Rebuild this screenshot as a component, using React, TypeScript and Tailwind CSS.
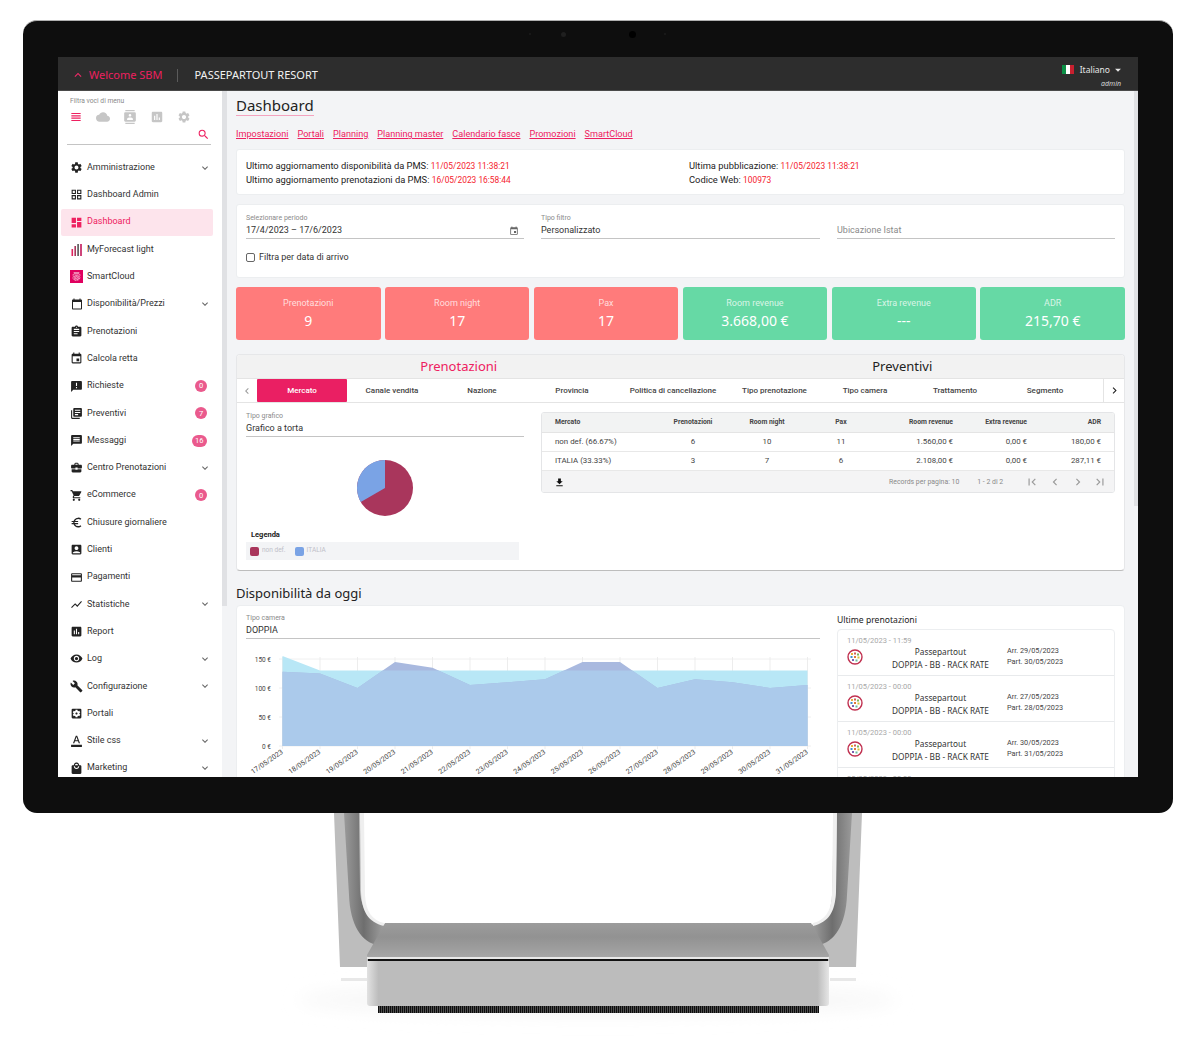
import React from "react";
import {
  MdSettings,
  MdGridView,
  MdDashboard,
  MdFingerprint,
  MdCalendarToday,
  MdAssignment,
  MdEvent,
  MdAnnouncement,
  MdLibraryBooks,
  MdMessage,
  MdBusinessCenter,
  MdShoppingCart,
  MdEuroSymbol,
  MdAccountBox,
  MdCreditCard,
  MdShowChart,
  MdAssessment,
  MdVisibility,
  MdBuild,
  MdSettingsApplications,
  MdFormatColorText,
  MdLocalMall,
  MdExpandMore,
  MdViewHeadline,
  MdCloud,
  MdContacts,
  MdSearch,
  MdKeyboardArrowUp,
  MdArrowDropDown,
  MdFileDownload,
  MdFirstPage,
  MdChevronLeft,
  MdChevronRight,
  MdLastPage,
} from "react-icons/md";

function BarsIcon({ size }: { size: number }) {
  return (
    <svg width={size} height={size} viewBox="0 0 12 12">
      <rect x="0.5" y="5" width="1.6" height="7" fill="#e0245e" />
      <rect x="3.4" y="2" width="1.6" height="10" fill="#a9365c" />
      <rect x="6.3" y="0" width="1.6" height="12" fill="#555" />
      <rect x="9.2" y="0" width="1.6" height="12" fill="#c2185b" />
    </svg>
  );
}

function CloudTile({ size }: { size: number }) {
  return (
    <span className="flex h-[13px] w-[13px] items-center justify-center bg-[#e0005f] text-white">
      <MdFingerprint size={size} />
    </span>
  );
}

type Item = {
  label: string;
  icon: React.ReactNode;
  arrow?: boolean;
  badge?: string;
  active?: boolean;
};

const menu: Item[] = [
  { label: "Amministrazione", icon: <MdSettings size={13} />, arrow: true },
  { label: "Dashboard Admin", icon: <MdGridView size={13} /> },
  { label: "Dashboard", icon: <MdDashboard size={13} />, active: true },
  { label: "MyForecast light", icon: <BarsIcon size={12} /> },
  { label: "SmartCloud", icon: <CloudTile size={11} /> },
  { label: "Disponibilità/Prezzi", icon: <MdCalendarToday size={12} />, arrow: true },
  { label: "Prenotazioni", icon: <MdAssignment size={13} /> },
  { label: "Calcola retta", icon: <MdEvent size={13} /> },
  { label: "Richieste", icon: <MdAnnouncement size={13} />, badge: "0" },
  { label: "Preventivi", icon: <MdLibraryBooks size={13} />, badge: "7" },
  { label: "Messaggi", icon: <MdMessage size={13} />, badge: "16" },
  { label: "Centro Prenotazioni", icon: <MdBusinessCenter size={13} />, arrow: true },
  { label: "eCommerce", icon: <MdShoppingCart size={13} />, badge: "0" },
  { label: "Chiusure giornaliere", icon: <MdEuroSymbol size={13} /> },
  { label: "Clienti", icon: <MdAccountBox size={13} /> },
  { label: "Pagamenti", icon: <MdCreditCard size={13} /> },
  { label: "Statistiche", icon: <MdShowChart size={13} />, arrow: true },
  { label: "Report", icon: <MdAssessment size={13} /> },
  { label: "Log", icon: <MdVisibility size={13} />, arrow: true },
  { label: "Configurazione", icon: <MdBuild size={13} />, arrow: true },
  { label: "Portali", icon: <MdSettingsApplications size={13} /> },
  { label: "Stile css", icon: <MdFormatColorText size={13} />, arrow: true },
  { label: "Marketing", icon: <MdLocalMall size={13} />, arrow: true },
];

const links = [
  "Impostazioni",
  "Portali",
  "Planning",
  "Planning master",
  "Calendario fasce",
  "Promozioni",
  "SmartCloud",
];

const kpis = [
  { label: "Prenotazioni", value: "9", green: false },
  { label: "Room night", value: "17", green: false },
  { label: "Pax", value: "17", green: false },
  { label: "Room revenue", value: "3.668,00 €", green: true },
  { label: "Extra revenue", value: "---", green: true },
  { label: "ADR", value: "215,70 €", green: true },
];

const tabs = [
  { label: "Mercato", w: "w-[90px]" },
  { label: "Canale vendita", w: "w-[90px]" },
  { label: "Nazione", w: "w-[90px]" },
  { label: "Provincia", w: "w-[90px]" },
  { label: "Politica di cancellazione", w: "w-[112px]" },
  { label: "Tipo prenotazione", w: "w-[91px]" },
  { label: "Tipo camera", w: "w-[90px]" },
  { label: "Trattamento", w: "w-[90px]" },
  { label: "Segmento", w: "w-[90px]" },
];

const tableRows = [
  ["non def. (66.67%)", "6", "10", "11", "1.560,00 €", "0,00 €", "180,00 €"],
  ["ITALIA (33.33%)", "3", "7", "6", "2.108,00 €", "0,00 €", "287,11 €"],
];

const tableHead = ["Mercato", "Prenotazioni", "Room night", "Pax", "Room revenue", "Extra revenue", "ADR"];

const cellAlign = ["text-left", "text-center", "text-center", "text-center", "text-right", "text-right", "text-right"];

const bookings = [
  { time: "11/05/2023 - 11:59", arr: "Arr. 29/05/2023", dep: "Part. 30/05/2023" },
  { time: "11/05/2023 - 00:00", arr: "Arr. 27/05/2023", dep: "Part. 28/05/2023" },
  { time: "11/05/2023 - 00:00", arr: "Arr. 30/05/2023", dep: "Part. 31/05/2023" },
];

const blueSeries = [128, 125, 100, 145, 135, 105, 110, 115, 145, 145, 100, 115, 110, 100, 105];
const cyanSeries = [155, 130, 130, 130, 130, 130, 130, 130, 130, 130, 130, 130, 130, 130, 130];
const chartX = (i: number) => 282.5 + i * 37.5;
const chartY = (v: number) => 746 - v * 0.58;
const toArea = (s: number[]) =>
  `282.5,746 ${s.map((v, i) => `${chartX(i)},${chartY(v)}`).join(" ")} 807.5,746`;

function AvailabilityChart() {
  return (
    <svg width="579" height="132" viewBox="246 645 579 132" className="block">
      <defs>
        <clipPath id="cyanClip">
          <polygon points={toArea(cyanSeries)} />
        </clipPath>
      </defs>
      {[659, 688, 717, 746].map((y) => (
        <line key={y} x1="279" x2="811" y1={y} y2={y} stroke="#ececec" strokeWidth="0.8" />
      ))}
      {blueSeries.map((_, i) => (
        <line key={i} x1={chartX(i)} x2={chartX(i)} y1="657" y2="749" stroke="#e8e8e8" strokeWidth="0.8" />
      ))}
      <polygon points={toArea(cyanSeries)} fill="#b8e7f6" />
      <polygon points={toArea(blueSeries)} fill="#a9b9df" />
      <polygon points={toArea(blueSeries)} fill="#abcaeb" clipPath="url(#cyanClip)" />
      {[
        ["150 €", 659],
        ["100 €", 688],
        ["50 €", 717],
        ["0 €", 746],
      ].map(([t, y]) => (
        <text key={t} x="271" y={Number(y) + 2.5} textAnchor="end" fontSize="6.5" fill="#444" fontFamily="Roboto, sans-serif">
          {t}
        </text>
      ))}
      {blueSeries.map((_, i) => (
        <text
          key={i}
          textAnchor="end"
          fontSize="7"
          fill="#444"
          fontFamily="Roboto, sans-serif"
          transform={`translate(${chartX(i) + 1} 753) rotate(-35)`}
        >
          {`${17 + i}/05/2023`}
        </text>
      ))}
    </svg>
  );
}

function PieChart() {
  return (
    <svg width="58" height="58" viewBox="0 0 58 58">
      <circle cx="29" cy="29" r="28" fill="#a9365c" />
      <path d="M29 29 L29 1 A28 28 0 0 0 4.75 43 Z" fill="#7aa3e5" />
    </svg>
  );
}

function GuestLogo() {
  return (
    <svg width="16" height="16" viewBox="0 0 16 16">
      <circle cx="8" cy="8" r="7" fill="#fff" stroke="#c0304f" strokeWidth="1.4" />
      <rect x="4" y="4" width="2" height="2" fill="#e8b23a" />
      <rect x="7" y="3.5" width="2" height="2" fill="#d0605a" />
      <rect x="10" y="4.5" width="2" height="2" fill="#7cb85a" />
      <rect x="3.5" y="7" width="2" height="2" fill="#3f8fd0" />
      <rect x="7" y="7" width="2" height="2" fill="#e07a3a" />
      <rect x="10.5" y="7.5" width="2" height="2" fill="#d8c23a" />
      <rect x="5" y="10" width="2" height="2" fill="#7a5fb0" />
      <rect x="8.5" y="10.5" width="2" height="2" fill="#6cc0a0" />
    </svg>
  );
}

function MonitorStand() {
  return (
    <svg width="1200" height="225" viewBox="0 813 1200 225" className="block">
      <defs>
        <filter id="soft" x="-20%" y="-100%" width="140%" height="300%">
          <feGaussianBlur stdDeviation="9" />
        </filter>
        <linearGradient id="strip" x1="0" x2="1" y1="0" y2="0">
          <stop offset="0" stopColor="#9a9a9a" />
          <stop offset="0.45" stopColor="#6e6e6e" />
          <stop offset="1" stopColor="#a8a8a8" />
        </linearGradient>
        <linearGradient id="stripR" x1="0" x2="1" y1="0" y2="0">
          <stop offset="0" stopColor="#a8a8a8" />
          <stop offset="0.55" stopColor="#6e6e6e" />
          <stop offset="1" stopColor="#9a9a9a" />
        </linearGradient>
        <linearGradient id="plate" x1="0" x2="0" y1="0" y2="1">
          <stop offset="0" stopColor="#9c9c9c" />
          <stop offset="0.4" stopColor="#929292" />
          <stop offset="1" stopColor="#a6a6a6" />
        </linearGradient>
        <linearGradient id="front" x1="0" x2="1" y1="0" y2="0">
          <stop offset="0" stopColor="#e2e2e2" />
          <stop offset="0.025" stopColor="#bcbcbc" />
          <stop offset="0.975" stopColor="#bcbcbc" />
          <stop offset="1" stopColor="#e6e6e6" />
        </linearGradient>
        <pattern id="vent" width="2" height="8" patternUnits="userSpaceOnUse">
          <rect width="1.2" height="8" fill="#0c0c0c" />
          <rect x="1.2" width="0.8" height="8" fill="#2e2e2e" />
        </pattern>
      </defs>

      <ellipse cx="598" cy="1000" rx="300" ry="14" fill="#f6f6f6" filter="url(#soft)" />
      <rect x="341" y="978" width="26" height="3" fill="#e8e8e8" />
      <rect x="830" y="978" width="26" height="3" fill="#e8e8e8" />

      {/* left leg */}
      <path d="M334 813 L340 967 L372 967 L390 932 C372 926 365 915 364 895 L360 813 Z" fill="#bdbdbd" />
      <path d="M344 813 L349 895 C350 925 362 943 378 945 L388 926 C372 922 361 912 360 890 L359 813 Z" fill="url(#strip)" />
      <path d="M360 813 L364 813 L365 895 C366 912 372 920 384 923 L384 926 C368 922 362 912 361 892 Z" fill="#efefef" />

      {/* right leg */}
      <path d="M862 813 L856 967 L824 967 L806 932 C824 926 831 915 832 895 L834 813 Z" fill="#bdbdbd" />
      <path d="M852 813 L847 895 C846 925 834 943 818 945 L808 926 C824 922 835 912 836 890 L837 813 Z" fill="url(#stripR)" />
      <path d="M837 813 L833 813 L832 895 C831 912 825 920 813 923 L813 926 C829 922 835 912 836 892 Z" fill="#efefef" />

      {/* base */}
      <path d="M385 923 L811 923 L829 955 Q829 958 826 958 L370 958 Q367 958 367 955 Z" fill="url(#plate)" />
      <rect x="367" y="957" width="462" height="2" fill="#e8e8e8" />
      <rect x="368" y="959" width="460" height="2" fill="#111" />
      <path d="M367 961 L829 961 L829 1003 Q829 1006 826 1006 L370 1006 Q367 1006 367 1003 Z" fill="url(#front)" />
      <rect x="378" y="1006" width="441" height="7" fill="url(#vent)" />
    </svg>
  );
}

function Field({ label, value, w }: { label?: string; value: string; w: string }) {
  return (
    <div className={`${w} shrink-0`}>
      <div className="h-[9px] text-[7px] leading-[9px] text-[#8a8a8a]">{label}</div>
      <div className={`mt-[1px] h-[13px] text-[9px] leading-[13px] ${label ? "text-[#333]" : "text-[#8a8a8a]"}`}>{value}</div>
      <div className="mt-[1px] h-[1px] bg-[#c4c4c4]" />
    </div>
  );
}

export default function App() {
  return (
    <div className="h-[1038px] w-[1200px] overflow-hidden bg-white font-['Roboto',sans-serif] text-[#333]">
      <div className="h-[20px]" />
      <div className="ml-[23px] flex h-[793px] w-[1150px] flex-col rounded-[14px] border-t border-[#b0b0b0] bg-[#0e0e0e] px-[35px]">
        <div className="flex h-[36px] shrink-0 items-center pb-[10px]">
          <span className="ml-[471px] h-[2px] w-[2px] rounded-full bg-[#1c1c1c]" />
          <span className="ml-[30px] h-[5px] w-[5px] rounded-full bg-[#1f1f1f]" />
          <span className="ml-[63px] h-[7px] w-[7px] rounded-full bg-[#000]" />
          <span className="ml-[28px] h-[2px] w-[2px] rounded-full bg-[#1c1c1c]" />
        </div>

        <div className="flex h-[720px] w-[1080px] shrink-0 flex-col overflow-hidden bg-[#f3f4f6]">
          {/* top bar */}
          <header className="flex h-[34px] shrink-0 items-center border-b border-[#4a4a4a] bg-[#2d2d2d] pt-[3px] font-['Noto_Sans',sans-serif] text-[11px]">
            <MdKeyboardArrowUp size={14} className="ml-[13px] text-[#f02a68]" />
            <span className="ml-[4px] text-[#ee2060]">Welcome SBM</span>
            <span className="ml-[14px] h-[13px] w-[1px] bg-[#5b5b5b]" />
            <span className="ml-[17px] text-[#f2f2f2]">PASSEPARTOUT RESORT</span>
            <div className="ml-auto mr-[13px] flex flex-col items-end">
              <div className="flex items-center text-[8.5px] leading-[12px] text-[#e6e6e6]">
                <span className="flex h-[9px] w-[12px]">
                  <span className="w-1/3 bg-[#0a8f45]" />
                  <span className="w-1/3 bg-white" />
                  <span className="w-1/3 bg-[#c8202f]" />
                </span>
                <span className="ml-[6px]">Italiano</span>
                <MdArrowDropDown size={14} className="ml-[1px]" />
              </div>
              <span className="mr-[4px] mt-[2px] text-[7px] italic leading-[9px] text-[#d8d8d8]">admin</span>
            </div>
          </header>

          <div className="flex min-h-0 flex-1">
            {/* sidebar */}
            <aside className="w-[164px] shrink-0 overflow-hidden bg-white">
              <div className="h-[63px]">
                <div className="ml-[12px] pt-[6px] text-[6.7px] leading-[8px] text-[#8a8a8a]">Filtra voci di menu</div>
                <div className="ml-[11px] mt-[5px] flex h-[14px] items-center gap-[13px] text-[#c6c6c6]">
                  <MdViewHeadline size={14} className="text-[#ee2060]" />
                  <MdCloud size={14} />
                  <MdContacts size={14} />
                  <MdAssessment size={14} />
                  <MdSettings size={14} />
                </div>
                <div className="ml-[9px] flex h-[21px] w-[144px] items-center justify-end border-b border-[#c4c4c4] pr-[1px]">
                  <MdSearch size={13} className="text-[#ee2060]" />
                </div>
              </div>
              {menu.map((m) => (
                <div
                  key={m.label}
                  className={`ml-[3px] flex h-[27.3px] w-[152px] items-center rounded-[2px] pl-[9px] text-[9px] ${
                    m.active ? "bg-[#fde4ec] text-[#ee2060]" : "text-[#333]"
                  }`}
                >
                  <span className={`flex w-[13px] shrink-0 justify-center ${m.active ? "text-[#ee2060]" : "text-[#222]"}`}>{m.icon}</span>
                  <span className="ml-[4px]">{m.label}</span>
                  {m.arrow && <MdExpandMore size={12} className="ml-auto mr-[2px] text-[#666]" />}
                  {m.badge && (
                    <span className="ml-auto mr-[6px] flex h-[12px] min-w-[12px] items-center justify-center rounded-full bg-[#ea5a8d] px-[3.5px] text-[7.5px] text-white">
                      {m.badge}
                    </span>
                  )}
                </div>
              ))}
            </aside>
            <div className="flex w-[5px] shrink-0 flex-col bg-[#f3f4f6]">
              <div className="h-[515px] bg-[#e0e1e4]" />
            </div>

            {/* content */}
            <main className="w-[907px] shrink-0 overflow-hidden pl-[9px] pr-[9px]">
              <h1 className="w-fit border-b border-[#f4a3bf] pt-[5px] font-['Noto_Sans',sans-serif] text-[15px] leading-[19px] text-[#222]">
                Dashboard
              </h1>
              <div className="mt-[12px] flex h-[12px] gap-[9px] text-[9.1px] leading-[12px] text-[#ee2060]">
                {links.map((l) => (
                  <span key={l} className="underline">
                    {l}
                  </span>
                ))}
              </div>

              <section className="mt-[9px] flex h-[46px] flex-col justify-center rounded-[3px] border border-[#eceef0] bg-white pl-[9px] pt-[2px] text-[9.35px] leading-[13px] text-[#222]">
                <div className="flex">
                  <span className="w-[443px]">
                    Ultimo aggiornamento disponibilità da PMS: <span className="text-[8.4px] text-[#f5222d]">11/05/2023 11:38:21</span>
                  </span>
                  <span>
                    Ultima pubblicazione: <span className="text-[8.4px] text-[#f5222d]">11/05/2023 11:38:21</span>
                  </span>
                </div>
                <div className="flex">
                  <span className="w-[443px]">
                    Ultimo aggiornamento prenotazioni da PMS: <span className="text-[8.4px] text-[#f5222d]">16/05/2023 16:58:44</span>
                  </span>
                  <span>
                    Codice Web: <span className="text-[8.4px] text-[#f5222d]">100973</span>
                  </span>
                </div>
              </section>

              <section className="mt-[9px] h-[74px] rounded-[3px] border border-[#eceef0] bg-white px-[9px] pt-[9px]">
                <div className="flex gap-[17px]">
                  <div className="relative w-[278px] shrink-0">
                    <Field label="Selezionare periodo" value="17/4/2023 – 17/6/2023" w="w-[278px]" />
                    <MdEvent size={10} className="absolute right-[5px] top-[12px] text-[#666]" />
                  </div>
                  <Field label="Tipo filtro" value="Personalizzato" w="w-[279px]" />
                  <Field value="Ubicazione Istat" w="w-[278px]" />
                </div>
                <div className="mt-[12px] flex items-center text-[9px] leading-[12px]">
                  <span className="h-[9px] w-[9px] rounded-[2px] border border-[#666]" />
                  <span className="ml-[4px]">Filtra per data di arrivo</span>
                </div>
              </section>

              <div className="mt-[9px] grid h-[53px] grid-cols-6 gap-[4.4px]">
                {kpis.map((k) => (
                  <div
                    key={k.label}
                    className={`flex flex-col items-center rounded-[3px] pt-[10px] text-white ${k.green ? "bg-[#66d9a5]" : "bg-[#ff7b7b]"}`}
                  >
                    <span className="text-[9px] leading-[12px] text-white/75">{k.label}</span>
                    <span className="mt-[3px] font-['Noto_Sans',sans-serif] text-[14px] leading-[18px]">{k.value}</span>
                  </div>
                ))}
              </div>

              {/* tabs card */}
              <section className="mt-[14px] h-[217px] overflow-hidden rounded-[4px] border border-[#e6e7e9] border-b-[#bdbdbd] bg-white">
                <div className="flex h-[24px] items-center border-b border-[#e4e4e4] bg-[#f2f2f2] font-['Noto_Sans',sans-serif] text-[13px]">
                  <span className="w-1/2 text-center text-[#ee2060]">Prenotazioni</span>
                  <span className="w-1/2 text-center text-[#222]">Preventivi</span>
                </div>
                <div className="flex h-[24px] border-b border-[#e4e4e4] text-[8px] font-medium text-[#444]">
                  <span className="flex w-[20px] items-center justify-center text-[#999]">
                    <MdChevronLeft size={12} />
                  </span>
                  {tabs.map((t, i) => (
                    <span
                      key={t.label}
                      className={`flex ${t.w} shrink-0 items-center justify-center ${i === 0 ? "rounded-[1px] bg-[#ea1f63] text-white" : ""}`}
                    >
                      {t.label}
                    </span>
                  ))}
                  <span className="w-[13px] shrink-0" />
                  <span className="flex flex-1 items-center justify-center border-l border-[#e4e4e4] text-[#222]">
                    <MdChevronRight size={13} />
                  </span>
                </div>

                <div className="flex pl-[9px] pt-[9px]">
                  <div className="w-[278px] shrink-0">
                    <Field label="Tipo grafico" value="Grafico a torta" w="w-[278px]" />
                    <div className="mt-[22px] flex justify-center">
                      <PieChart />
                    </div>
                    <div className="ml-[5px] mt-[13px] text-[7.5px] font-bold leading-[10px] text-[#222]">Legenda</div>
                    <div className="mt-[2px] flex h-[18px] w-[273px] items-center bg-[#f3f4f6] pl-[4px] text-[6.5px] text-[#c0c0c8]">
                      <span className="h-[9px] w-[9px] rounded-[2px] bg-[#a9365c]" />
                      <span className="ml-[3px]">non def.</span>
                      <span className="ml-[9px] h-[9px] w-[9px] rounded-[2px] bg-[#7aa3e5]" />
                      <span className="ml-[3px]">ITALIA</span>
                    </div>
                  </div>

                  <div className="ml-[17px] h-[81px] w-[574px] shrink-0 overflow-hidden rounded-[3px] border border-[#e4e5e7] text-[#444]">
                    <div className="grid h-[20px] grid-cols-[101px_74px_74px_74px_75px_74px_74px] items-center border-b border-[#e4e4e4] bg-[#f2f3f3] pl-[13px] text-[6.8px] font-bold">
                      {tableHead.map((h, i) => (
                        <span key={h} className={cellAlign[i]}>
                          {h}
                        </span>
                      ))}
                    </div>
                    {tableRows.map((r) => (
                      <div
                        key={r[0]}
                        className="grid h-[19px] grid-cols-[101px_74px_74px_74px_75px_74px_74px] items-center border-b border-[#e8e8e8] pl-[13px] text-[7.9px]"
                      >
                        {r.map((c, i) => (
                          <span key={i} className={cellAlign[i]}>
                            {c}
                          </span>
                        ))}
                      </div>
                    ))}
                    <div className="flex h-[22px] items-center bg-[#f4f4f5] pl-[12px] text-[6.9px] text-[#8a8a8a]">
                      <MdFileDownload size={11} className="text-[#111]" />
                      <span className="ml-[324px]">Records per pagina: 10</span>
                      <span className="ml-[18px]">1 - 2 di 2</span>
                      <span className="ml-[22px] flex gap-[8.7px] text-[#999]">
                        <MdFirstPage size={14} />
                        <MdChevronLeft size={14} />
                        <MdChevronRight size={14} />
                        <MdLastPage size={14} />
                      </span>
                    </div>
                  </div>
                </div>
              </section>

              <h2 className="mt-[13px] h-[20px] font-['Noto_Sans',sans-serif] text-[13px] leading-[18px] text-[#222]">Disponibilità da oggi</h2>

              <section className="mt-[1px] flex h-[200px] rounded-[4px] border border-[#eceef0] bg-white pl-[9px] pt-[8px]">
                <div className="w-[579px] shrink-0">
                  <Field label="Tipo camera" value="DOPPIA" w="w-[574px]" />
                  <div className="mt-[6px]">
                    <AvailabilityChart />
                  </div>
                </div>
                <div className="ml-[12px] w-[278px] shrink-0">
                  <div className="font-['Noto_Sans',sans-serif] text-[8.6px] leading-[12px] text-[#222]">Ultime prenotazioni</div>
                  <div className="mt-[3px] rounded-[4px] border border-[#eceef0]">
                    {bookings.map((b, i) => (
                      <div key={i} className="h-[46px] border-b border-[#e8eaec] pl-[9px] pt-[6px]">
                        <div className="text-[7.5px] leading-[9px] text-[#a8a8a8]">{b.time}</div>
                        <div className="flex items-start">
                          <span className="mt-[4px] w-[17px] shrink-0">
                            <GuestLogo />
                          </span>
                          <div className="ml-[18px] w-[117px] text-center font-['Noto_Sans',sans-serif] text-[8.25px] leading-[13px] text-[#333]">
                            <div>Passepartout</div>
                            <div>DOPPIA - BB - RACK RATE</div>
                          </div>
                          <div className="ml-[8px] text-[7.3px] leading-[11px] text-[#444]">
                            <div>{b.arr}</div>
                            <div>{b.dep}</div>
                          </div>
                        </div>
                      </div>
                    ))}
                    <div className="h-[46px] pl-[9px] pt-[6px] text-[7.5px] leading-[9px] text-[#a8a8a8]">05/05/2023 - 00:00</div>
                  </div>
                </div>
              </section>
            </main>

            <div className="w-[4px] shrink-0 bg-[#f3f4f6]">
              <div className="h-[415px] bg-[#e0e1e4]" />
            </div>
          </div>
        </div>
      </div>
      <MonitorStand />
    </div>
  );
}
